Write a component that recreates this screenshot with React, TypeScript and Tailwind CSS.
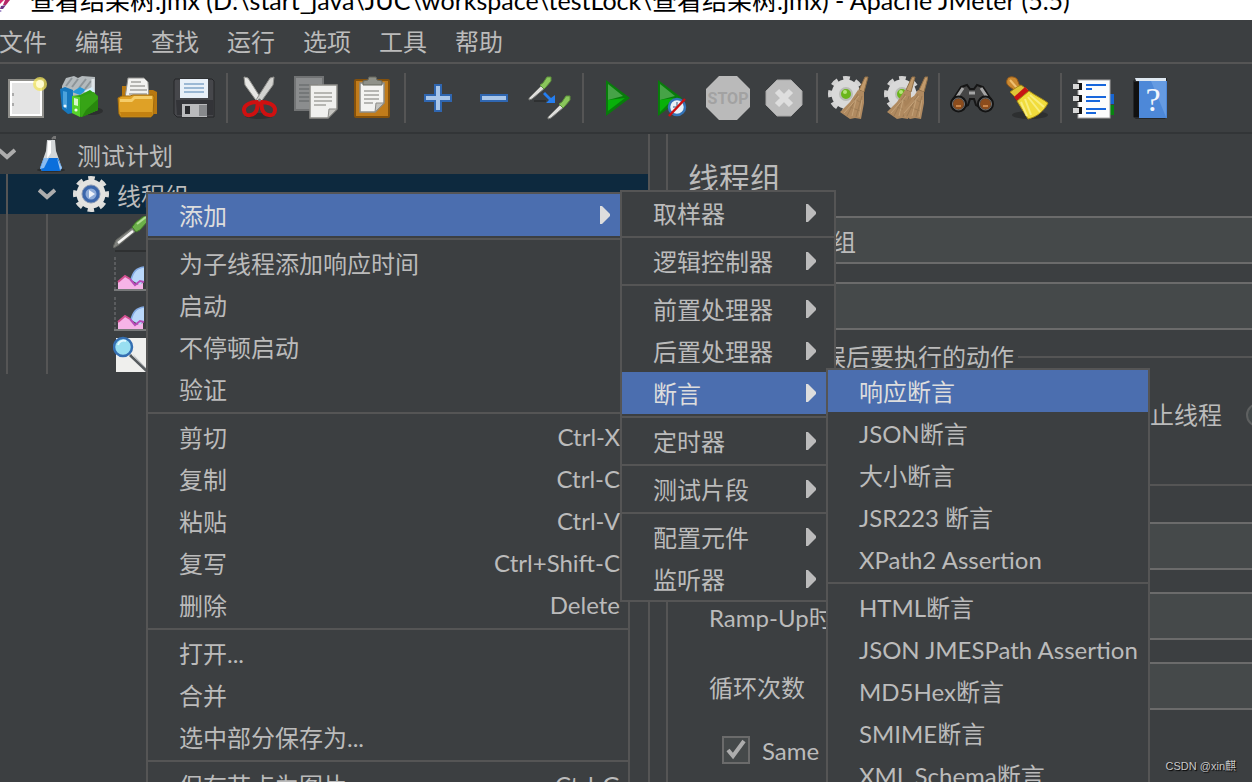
import type { ReactNode } from "react";

type Entry = {
  label: string;
  shortcut?: string;
  sub?: boolean;
  active?: boolean;
};

const menus = ["文件", "编辑", "查找", "运行", "选项", "工具", "帮助"];

const contextMenu: Entry[][] = [
  [{ label: "添加", sub: true, active: true }],
  [
    { label: "为子线程添加响应时间" },
    { label: "启动" },
    { label: "不停顿启动" },
    { label: "验证" },
  ],
  [
    { label: "剪切", shortcut: "Ctrl-X" },
    { label: "复制", shortcut: "Ctrl-C" },
    { label: "粘贴", shortcut: "Ctrl-V" },
    { label: "复写", shortcut: "Ctrl+Shift-C" },
    { label: "删除", shortcut: "Delete" },
  ],
  [{ label: "打开..." }, { label: "合并" }, { label: "选中部分保存为..." }],
  [{ label: "保存节点为图片", shortcut: "Ctrl-G" }],
];

const addMenu: Entry[][] = [
  [{ label: "取样器", sub: true }],
  [{ label: "逻辑控制器", sub: true }],
  [
    { label: "前置处理器", sub: true },
    { label: "后置处理器", sub: true },
    { label: "断言", sub: true, active: true },
  ],
  [{ label: "定时器", sub: true }],
  [{ label: "测试片段", sub: true }],
  [
    { label: "配置元件", sub: true },
    { label: "监听器", sub: true },
  ],
];

const assertionMenu: Entry[][] = [
  [
    { label: "响应断言", active: true },
    { label: "JSON断言" },
    { label: "大小断言" },
    { label: "JSR223 断言" },
    { label: "XPath2 Assertion" },
  ],
  [
    { label: "HTML断言" },
    { label: "JSON JMESPath Assertion" },
    { label: "MD5Hex断言" },
    { label: "SMIME断言" },
    { label: "XML Schema断言" },
  ],
];

const Popup = ({
  groups,
  className,
  label,
}: {
  groups: Entry[][];
  className: string;
  label: string;
}) => (
  <div
    role="menu"
    aria-label={label}
    className={`absolute border-2 border-[#555555] bg-[#3c3f41] ${className}`}
  >
    {groups.map((group, index) => (
      <div key={index}>
        {index > 0 && <div className="my-0.5 h-0.5 bg-[#555555]" />}
        {group.map((entry) => (
          <button
            key={entry.label}
            role="menuitem"
            className={`flex h-[42px] w-full items-center justify-between whitespace-nowrap pl-[31px] pr-2 text-left ${
              entry.active ? "bg-[#4b6eaf] text-[#dddddd]" : ""
            }`}
          >
            <span className="pt-0.5">{entry.label}</span>
            {entry.shortcut && <span>{entry.shortcut}</span>}
            {entry.sub && (
              <svg viewBox="0 0 10 18" className="mr-2.5 h-[18px] w-2.5" fill="currentColor">
                <path d="M0 0h2l8 8v2l-8 8H0z" />
              </svg>
            )}
          </button>
        ))}
      </div>
    ))}
  </div>
);

const Page = ({ x, y, w, h, fill }: { x: number; y: number; w: number; h: number; fill: string }) => (
  <g>
    <path
      d={`M${x} ${y}h${w}v${h - 9}l-9 9H${x}z`}
      fill={fill}
      stroke="#8d8d89"
      strokeWidth="1.5"
    />
    <path d={`M${x + w} ${y + h - 9}h-8l-1 9z`} fill="#c4c4c0" stroke="#8d8d89" />
    <path
      d={`M${x + 4} ${y + 8}h${w - 9}M${x + 4} ${y + 12}h${w - 9}M${x + 4} ${y + 16}h${w - 9}M${x + 4} ${y + 20}h${w - 15}`}
      stroke="#a3a39f"
      strokeWidth="1.5"
    />
  </g>
);

const NewIcon = () => (
  <>
    <rect x="5" y="4" width="34" height="37" fill="#e4e4e4" stroke="#8f8f8b" strokeWidth="2" />
    <rect x="7" y="6" width="30" height="33" fill="none" stroke="#fff" strokeWidth="2" />
    <path d="M9 17v3M9 27v3" stroke="#aaa" strokeWidth="2" />
    <circle cx="36" cy="8" r="7" fill="#f3e65c" opacity=".75" />
    <circle cx="36" cy="8" r="4" fill="#fffbd0" />
  </>
);

const TemplatesIcon = () => (
  <>
    <ellipse cx="31" cy="35" rx="12" ry="4" fill="#2d2f30" />
    <path d="M2 10L6 2l8-2 4 2 4-2 13 1v17l-17 4L2 15z" fill="#b4babd" />
    <path d="M6 10l6-8M12 11l6-8M19 12l7-9M25 13l6-8" stroke="#8d9498" strokeWidth="2" />
    <path d="M33 3v12" stroke="#dfe4e7" strokeWidth="3" />
    <path d="M0 13l5-2 8 3v23l-5 1-6-5z" fill="#1677bd" />
    <path d="M3 15l4 1v17l-4-3z" fill="#4ba3dd" />
    <path d="M12 16l8-5 6 3-6 5z" fill="#2798d8" />
    <path d="M24 15l8-4 3 5-8 3z" fill="#d5eefa" />
    <path d="M12 20l8-1 10-5 8 6v14l-17 7-9-4z" fill="#2fa012" />
    <path d="M12 20l8 1v20l-8-4z" fill="#57d32c" />
    <path d="M20 21l14-5 4 6v12l-17 7z" fill="#37a416" />
    <path d="M26 34l12-11v11l-16 7z" fill="#28870d" />
    <path d="M14 22l4 1v7l-4-1z" fill="#d8f7ca" />
    <circle cx="16" cy="34" r="1.6" fill="#effbea" />
    <circle cx="5" cy="30" r="1.5" fill="#e8f5fc" />
  </>
);

const OpenIcon = () => (
  <>
    <path d="M6 10h9l2 4h20l4 2v22H6z" fill="#b87811" />
    <path d="M12 2h16l4 4 1 16H9z" fill="#f2f2f0" stroke="#8f8f8c" />
    <path d="M15 6h10M14 10h15M14 14h17M13 18h18" stroke="#a2a29f" strokeWidth="1.5" />
    <path d="M2 22l4-2h8l3-1h20l1 2-1 18-2 2H5l-2-3z" fill="#dfa126" stroke="#a36c0d" />
    <path d="M4 23h11l3-3h18v3H19l-3 3H4z" fill="#f5cd69" />
    <path d="M4 36h32v4H5z" fill="#c38110" />
  </>
);

const SaveIcon = () => (
  <>
    <path d="M3 3h37l2 2v36H5l-3-3V5z" fill="#46474b" stroke="#252629" />
    <path d="M4 24h37v15H5z" fill="#333438" />
    <rect x="8" y="3" width="28" height="19" fill="#e8f0f8" />
    <path d="M12 8h20M12 12h20M12 16h20" stroke="#9bb8d4" strokeWidth="2" />
    <path d="M10 28h25v13H10z" fill="#b9babc" />
    <path d="M27 29h8v11h-8z" fill="#87898c" />
    <rect x="13" y="30" width="5" height="8" fill="#292a2d" />
  </>
);

const CutIcon = () => (
  <>
    <ellipse cx="21" cy="40" rx="14" ry="3" fill="#2f3132" />
    <path d="M6 1l4 1 14 22-4 3L7 9z" fill="#e7e7e5" stroke="#989894" />
    <path d="M36 1l-4 1-14 22 4 3L35 9z" fill="#d2d2cf" stroke="#90908d" />
    <g fill="none" stroke="#cf1010" strokeWidth="4">
      <path d="M20 26c-6 0-14 2-14 8 0 8 11 6 13-1zM23 26c6 0 14 2 14 8 0 8-11 6-13-1z" />
    </g>
    <circle cx="21.5" cy="24" r="1.5" fill="#777" />
  </>
);

const CopyIcon = () => (
  <>
    <rect x="1" y="1" width="28" height="33" fill="#8b8d8e" stroke="#717374" strokeWidth="2" />
    <path d="M5 9h19M5 13h19M5 17h19M5 21h19M5 25h16" stroke="#6e7071" strokeWidth="1.5" />
    <Page x={16} y={9} w={27} h={33} fill="#f0f0ee" />
  </>
);

const PasteIcon = () => (
  <>
    <rect x="5" y="4" width="34" height="37" rx="1" fill="#c17c1b" stroke="#84510c" strokeWidth="2" />
    <Page x={10} y={7} w={24} h={29} fill="#f3f3f1" />
    <path d="M13 9V5l5-1 1-3h7l1 3 5 1v4z" fill="#8f9189" stroke="#66685f" />
  </>
);

const PlusIcon = () => (
  <path
    d="M19 9h6v10h10v6H25v10h-6V25H9v-6h10z"
    fill="#a9c6e9"
    stroke="#2f66b0"
    strokeWidth="2"
  />
);

const MinusIcon = () => (
  <rect x="9" y="19" width="26" height="6" fill="#a9c6e9" stroke="#2f66b0" strokeWidth="2" />
);

const Dropper = () => (
  <>
    <path d="M1 22L14 9l3 3L4 23l-3 1z" fill="#dededc" stroke="#777975" />
    <path d="M12 9l3-2 4-6h4v4l-5 6-2 2z" fill="#8ac65c" stroke="#5c913a" />
  </>
);

const ToggleIcon = () => (
  <>
    <path d="M6 25h12" stroke="#2e3031" strokeWidth="2" />
    <Dropper />
    <g transform="translate(19 19)">
      <Dropper />
    </g>
    <path d="M17 16l6 6 4-3v8h-9l3-3-6-6z" fill="#257ef0" />
  </>
);

const StartIcon = () => (
  <>
    <path d="M12 4l24 18-24 18z" fill="#087c0b" />
    <path d="M14 8l15 12-15 4z" fill="#46a347" />
    <path d="M14 24l17-2-17 13z" fill="#08b10a" />
  </>
);

const StartNoPauseIcon = () => (
  <>
    <path d="M8 4l24 18L8 40z" fill="#087c0b" />
    <path d="M10 8l15 12-15 4z" fill="#46a347" />
    <path d="M10 24l14-2-14 14z" fill="#08b10a" />
    <circle cx="27" cy="31" r="8" fill="#e9f1f8" stroke="#3474b8" strokeWidth="2.5" />
    <path d="M27 26v5h-4" stroke="#8ea7bd" strokeWidth="2" fill="none" />
    <path d="M19 40l16-17" stroke="#cc1010" strokeWidth="2.5" />
  </>
);

const StopIcon = () => (
  <>
    <path d="M13 0h18l13 13v18L31 44H13L0 31V13z" fill="#bababa" />
    <text
      x="22"
      y="28"
      textAnchor="middle"
      fontSize="16"
      fontWeight="bold"
      fontFamily="Roboto, sans-serif"
      fill="#a2a2a2"
    >
      STOP
    </text>
  </>
);

const ShutdownIcon = () => (
  <>
    <path d="M15 4h14l11 11v14L29 40H15L4 29V15z" fill="#bcbcbc" stroke="#a9a9a9" />
    <path d="M15 15l14 14M29 15L15 29" stroke="#dedede" strokeWidth="6" />
  </>
);

const Cog = () => (
  <>
    <circle
      cx="18"
      cy="18"
      r="15"
      fill="none"
      stroke="#d2d2d2"
      strokeWidth="6"
      strokeDasharray="6.4 5.38"
      strokeDashoffset="3.2"
    />
    <circle cx="18" cy="18" r="14.5" fill="#d9d9d9" />
    <circle cx="18" cy="18" r="6" fill="#6bb51c" stroke="#b9bbb6" strokeWidth="2" />
    <circle cx="17" cy="16" r="2" fill="#b5e578" />
  </>
);

const Besom = () => (
  <>
    <path d="M37 1h3l-4 15-5-2z" fill="#c19a6b" stroke="#8f6f48" />
    <path d="M30 14l6 2v11l-3 16-6-1-5 1-10-7 10-10z" fill="#b08a60" />
    <path d="M30 18L19 40M34 20l-6 21M26 23l8 4M22 31l10 4" stroke="#9c7b54" />
    <path d="M31 20l-15 17M34 24l-3 17M28 24l-4 16" stroke="#c4a278" />
  </>
);

const ClearIcon = () => (
  <>
    <Cog />
    <Besom />
  </>
);

const ClearAllIcon = () => (
  <>
    <Cog />
    <g transform="translate(-9 0)">
      <Besom />
    </g>
    <path d="M20 26l10-6v22l-8-1z" fill="#a98359" />
    <g transform="translate(4 0)">
      <Besom />
    </g>
  </>
);

const SearchIcon = () => (
  <>
    <path
      d="M11 11l6-2 3 4h4l3-4 6 2 9 14-7 9-9-5-2-6h-4l-2 6-9 5-7-9z"
      fill="#454545"
      stroke="#161616"
      strokeWidth="2"
    />
    <path d="M13 12l-6 9M31 12l6 9M19 17h6" stroke="#a5a5a5" strokeWidth="3" />
    <circle cx="8.5" cy="28" r="7" fill="#8b4c1d" stroke="#141414" strokeWidth="3" />
    <circle cx="35.5" cy="28" r="7" fill="#8b4c1d" stroke="#141414" strokeWidth="3" />
    <circle cx="8.5" cy="28" r="6" fill="none" stroke="#777" />
    <circle cx="35.5" cy="28" r="6" fill="none" stroke="#777" />
    <path d="M6 30h5M33 30h5" stroke="#c98449" strokeWidth="2" />
  </>
);

const ResetSearchIcon = () => (
  <>
    <ellipse cx="24" cy="39" rx="18" ry="4" fill="#2d2f30" />
    <path d="M1 4c1-4 7-4 10-1l2 5 2 5-4 3-7-5C1 9 0 7 1 4z" fill="#cb8930" stroke="#94591a" />
    <path d="M4 4l7 8" stroke="#efbf70" strokeWidth="2" />
    <path d="M4 16c3-2 6-5 11-7l7 5-12 8z" fill="#e0c537" stroke="#a28417" />
    <path d="M8 21l11-10 4 4-12 10z" fill="#c81414" />
    <path d="M11 25l12-10c7 5 14 8 19 12-4 8-11 14-20 16z" fill="#f1dc3c" stroke="#a98e16" />
    <path d="M19 23l6 16M22 21l12 15M24 19l14 12M15 26l6 14" stroke="#f8ed7c" strokeWidth="2" />
  </>
);

const FunctionIcon = () => (
  <>
    <path d="M36 18h6v10h-6z" fill="#1765d2" />
    <path d="M36 29h6v10h-6z" fill="#078410" />
    <rect x="6" y="4" width="32" height="38" fill="#fcfcfc" stroke="#a6a6a6" />
    <path d="M14 9h20M14 13h6M14 21h20M14 25h14M14 33h20M14 37h10" stroke="#1766dc" strokeWidth="2" />
    <path d="M5 7h5v7H5zM5 19h5v7H5zM5 31h5v7H5z" fill="#161616" />
    <path d="M1 8h6v5H1zM1 20h6v5H1zM1 32h6v5H1z" fill="#d7d7d7" />
  </>
);

const HelpIcon = () => (
  <>
    <path d="M5 5l3-3h31v38l-2 3H8l-3-2z" fill="#252729" />
    <path d="M7 2h31v3H8z" fill="#dfe8f1" />
    <path d="M11 5h28v37H11z" fill="#4d88d8" />
    <path d="M23 5h15v36z" fill="#659be2" />
    <path d="M6 6h5v35H6z" fill="#111" />
    <text x="25" y="35" textAnchor="middle" fontSize="34" fontFamily="Liberation Serif, serif" fill="#f1f6fc">
      ?
    </text>
  </>
);

const toolbar: { name: string; icon: ReactNode }[][] = [
  [
    { name: "新建", icon: <NewIcon /> },
    { name: "模板", icon: <TemplatesIcon /> },
    { name: "打开", icon: <OpenIcon /> },
    { name: "保存", icon: <SaveIcon /> },
  ],
  [
    { name: "剪切", icon: <CutIcon /> },
    { name: "复制", icon: <CopyIcon /> },
    { name: "粘贴", icon: <PasteIcon /> },
  ],
  [
    { name: "展开", icon: <PlusIcon /> },
    { name: "收起", icon: <MinusIcon /> },
    { name: "切换", icon: <ToggleIcon /> },
  ],
  [
    { name: "启动", icon: <StartIcon /> },
    { name: "不停顿启动", icon: <StartNoPauseIcon /> },
    { name: "停止", icon: <StopIcon /> },
    { name: "关闭", icon: <ShutdownIcon /> },
  ],
  [
    { name: "清除", icon: <ClearIcon /> },
    { name: "清除全部", icon: <ClearAllIcon /> },
  ],
  [
    { name: "查找", icon: <SearchIcon /> },
    { name: "重置搜索", icon: <ResetSearchIcon /> },
  ],
  [
    { name: "函数助手", icon: <FunctionIcon /> },
    { name: "帮助", icon: <HelpIcon /> },
  ],
];

const FlaskIcon = () => (
  <>
    <ellipse cx="18" cy="34" rx="14" ry="2" fill="#2b2d2e" />
    <path d="M19 3l3-3v3" stroke="#777" strokeWidth="2" fill="none" />
    <path d="M14 4h8l1 11 6 17-2 3H9l-2-3 6-17z" fill="#d3d6d8" />
    <path d="M15 5h3v12l-4 6z" fill="#fff" />
    <path d="M11 22h14l4 10-2 3H9l-2-3z" fill="#0b6fdc" />
    <path d="M11 22h5l-5 10-4 1z" fill="#8bbcf0" />
    <path d="M24 22l5 10-2 2z" fill="#a5caf2" />
  </>
);

const ThreadGroupIcon = () => (
  <>
    <circle
      cx="18"
      cy="18"
      r="14.5"
      fill="none"
      stroke="#deddda"
      strokeWidth="7"
      strokeDasharray="6 5.39"
      strokeDashoffset="3"
    />
    <circle cx="18" cy="18" r="11.5" fill="none" stroke="#e4e3e0" strokeWidth="6" />
    <circle cx="18" cy="18" r="9" fill="#3b66ab" stroke="#8898b4" />
    <circle cx="18" cy="18" r="5.5" fill="#8facd8" />
    <path d="M16 14l6 4-6 4z" fill="#f0f4fa" />
  </>
);

const SamplerIcon = () => (
  <>
    <path d="M2 35h33" stroke="#2e3031" strokeWidth="2" />
    <path d="M0 31l3-7 17-13 3 4L6 29l-5 3z" fill="#81837f" stroke="#5e605c" />
    <path d="M5 27l15-12" stroke="#f4f4f2" strokeWidth="2.5" />
    <path d="M19 11l4-5 8-6h4v5l-8 9-4 2z" fill="#6cb04a" stroke="#3e7527" />
    <path d="M24 8l9-7" stroke="#b1dc93" strokeWidth="2" />
  </>
);

const ListenerIcon = () => (
  <>
    <path d="M2 1v32" stroke="#5a5c5e" strokeWidth="2" strokeDasharray="3 2" fill="none" />
    <path d="M1 34h34" stroke="#77797a" strokeWidth="2" />
    <path d="M5 33v-7l7-6 5 3 5 6 8-2v6z" fill="#f6b4e8" />
    <path d="M5 26l7-6 5 3" stroke="#d0508f" strokeWidth="2" fill="none" />
    <path d="M18 24c2-8 5-12 13-13v14l-4 4z" fill="#b9d7fa" />
    <path d="M18 24c2-8 5-12 13-13" stroke="#84abe4" strokeWidth="1.5" fill="none" />
    <path d="M17 23l5 6 5-4 4 1" stroke="#b84bb9" strokeWidth="2" fill="none" />
  </>
);

const ResultTreeIcon = () => (
  <>
    <path d="M3 2h33v34H3z" fill="#efefed" />
    <path d="M20 18l15 16-9-6z" fill="#c4c6c8" />
    <circle cx="10" cy="11" r="9" fill="#99dff1" stroke="#356fb2" strokeWidth="2.5" />
    <path d="M5 9c1-4 5-5 8-4" stroke="#e2f9ff" strokeWidth="2" fill="none" />
    <path d="M17 19l18 17" stroke="#565a5d" strokeWidth="3" />
    <path d="M19 19l16 15" stroke="#c5c8ca" />
  </>
);

const TreeRow = ({
  depth,
  icon,
  label,
  open,
  selected,
}: {
  depth: number;
  icon: ReactNode;
  label?: string;
  open?: boolean;
  selected?: boolean;
}) => (
  <li className={`flex h-10 items-center ${selected ? "bg-[#0d293e]" : ""}`}>
    {Array.from({ length: depth }, (_, i) => (
      <span key={i} className="h-10 w-10 shrink-0 pl-1.5">
        <span className="block h-full border-l-2 border-[#555555]" />
      </span>
    ))}
    <span className="w-[33px] shrink-0">
      {open && (
        <svg viewBox="0 0 18 12" className="-ml-0.5 h-3 w-[18px]" fill="none" stroke="#adadad" strokeWidth="4">
          <path d="M1 2l8 7 8-7" />
        </svg>
      )}
    </span>
    <svg viewBox="0 0 36 36" className="h-9 w-9 shrink-0">
      {icon}
    </svg>
    {label && <span className="ml-2 mt-1">{label}</span>}
  </li>
);

const Field = ({
  id,
  label,
  value,
  labelClass,
}: {
  id: string;
  label: string;
  value?: string;
  labelClass: string;
}) => (
  <div className="flex items-center">
    <label htmlFor={id} className={`shrink-0 whitespace-nowrap pt-1 ${labelClass}`}>
      {label}
    </label>
    <input
      id={id}
      defaultValue={value}
      className="h-12 min-w-0 flex-1 border-y-2 border-l-2 border-[#6b6b6b] bg-[#45494a] px-2"
    />
  </div>
);

const GroupTitle = ({ children }: { children: ReactNode }) => (
  <div className="flex h-6 items-center gap-1">
    <span className="h-0.5 w-2.5 bg-[#555555]" />
    <h3 className="whitespace-nowrap">{children}</h3>
    <span className="h-0.5 flex-1 bg-[#555555]" />
  </div>
);

const actions = ["继续", "启动下一进程循环", "停止线程", "停止测试"];

const App = () => {
  return (
    <div className="relative flex h-screen flex-col overflow-hidden bg-[#3c3f41] font-['Lato','Noto_Sans_CJK_SC',sans-serif] text-2xl leading-6 text-[#bbbbbb]">
      <header className="flex h-5 shrink-0 items-end overflow-hidden bg-white text-[25px] text-black">
        <svg viewBox="0 0 12 20" className="h-5 w-[30px] shrink-0" preserveAspectRatio="xMinYMin">
          <path d="M0 0h4l-4 4z" fill="#d22d6d" />
          <path d="M5 0h5L6 5H3z" fill="#b52868" />
          <path d="M1 6l5-1-3 4H0z" fill="#6e3585" />
          <path d="M0 10l2 1-2 1z" fill="#8b6fbb" />
        </svg>
        <h1 className="mb-2 whitespace-nowrap">
          查看结果树.jmx (D:\start_java\JUC\workspace\testLock\查看结果树.jmx) - Apache JMeter (5.5)
        </h1>
      </header>

      <nav className="flex h-11 shrink-0 items-center gap-7 border-b-2 border-[#555555] pt-0.5">
        {menus.map((menu) => (
          <button key={menu} className="first:-ml-px">
            {menu}
          </button>
        ))}
      </nav>

      <div className="-ml-0.5 flex h-[70px] shrink-0 items-center border-b-2 border-[#323537]">
        {toolbar.map((group, index) => (
          <div key={index} className="flex items-center">
            {index > 0 && <span className="mx-1 h-[50px] w-0.5 bg-[#555555]" />}
            {group.map(({ name, icon }) => (
              <button key={name} aria-label={name} className="flex w-14 justify-center">
                <svg viewBox="0 0 44 44" className="h-11 w-11">
                  {icon}
                </svg>
              </button>
            ))}
          </div>
        ))}
      </div>

      <main className="flex min-h-0 flex-1">
        <ul className="w-[650px] shrink-0 border-r-2 border-[#555555]">
          <TreeRow depth={0} open icon={<FlaskIcon />} label="测试计划" />
          <TreeRow depth={1} open selected icon={<ThreadGroupIcon />} label="线程组" />
          <TreeRow depth={2} icon={<SamplerIcon />} />
          <TreeRow depth={2} icon={<ListenerIcon />} />
          <TreeRow depth={2} icon={<ListenerIcon />} />
          <TreeRow depth={2} icon={<ResultTreeIcon />} />
        </ul>

        <section className="ml-4 min-w-0 flex-1 overflow-hidden border-l-2 border-[#555555] pl-5 pt-6">
          <h2 className="flex h-10 items-center text-[31px]">线程组</h2>
          <div className="mt-[18px] flex flex-col gap-[18px]">
            <Field id="name" label="名称：" value="线程组" labelClass="w-[86px]" />
            <Field id="comments" label="注释：" labelClass="w-[86px]" />
          </div>

          <div className="mt-[15px]">
            <GroupTitle>在取样器错误后要执行的动作</GroupTitle>
            <div className="mt-[26px] flex h-10 items-center gap-6 pl-12">
              {actions.map((action, index) => (
                <label key={action} className="flex shrink-0 items-center gap-2.5 whitespace-nowrap">
                  <input
                    type="radio"
                    name="on-error"
                    defaultChecked={index === 0}
                    className="h-6 w-6 appearance-none rounded-full border-2 border-[#5e6060] bg-[#43494a]"
                  />
                  {action}
                </label>
              ))}
            </div>
          </div>

          <div className="mt-[38px]">
            <GroupTitle>线程属性</GroupTitle>
            <div className="mt-[25px] flex flex-col gap-[22px] pl-[21px]">
              <Field id="threads" label="线程数：" labelClass="w-60" />
              <Field id="ramp-up" label="Ramp-Up时间（秒）：" labelClass="w-60" />
              <Field id="loops" label="循环次数" labelClass="w-60" />
            </div>
            <label className="mt-[26px] flex items-center gap-3 whitespace-nowrap pl-[34px]">
              <span className="grid">
                <input
                  type="checkbox"
                  defaultChecked
                  className="col-start-1 row-start-1 h-7 w-7 appearance-none border-2 border-[#6b6b6b] bg-[#45494a]"
                />
                <svg
                  viewBox="0 0 28 28"
                  className="pointer-events-none col-start-1 row-start-1 h-7 w-7"
                  fill="none"
                  stroke="#adadad"
                  strokeWidth="4"
                >
                  <path d="M6 14l5 6L22 5" />
                </svg>
              </span>
              <span className="pt-0.5">Same user on each iteration</span>
            </label>
          </div>
        </section>
      </main>

      <Popup label="线程组" groups={contextMenu} className="left-[146px] top-48 w-[484px]" />
      <Popup label="添加" groups={addMenu} className="left-[620px] top-[190px] w-[216px]" />
      <Popup label="断言" groups={assertionMenu} className="left-[826px] top-[368px] w-[324px]" />

      <p className="absolute bottom-2 right-4 font-['Liberation_Sans','Noto_Sans_CJK_SC',sans-serif] text-[11px] leading-4 text-[#c8c8c8] [text-shadow:1px_1px_1px_#000]">
        CSDN @xin麒
      </p>
    </div>
  );
};

export default App;
